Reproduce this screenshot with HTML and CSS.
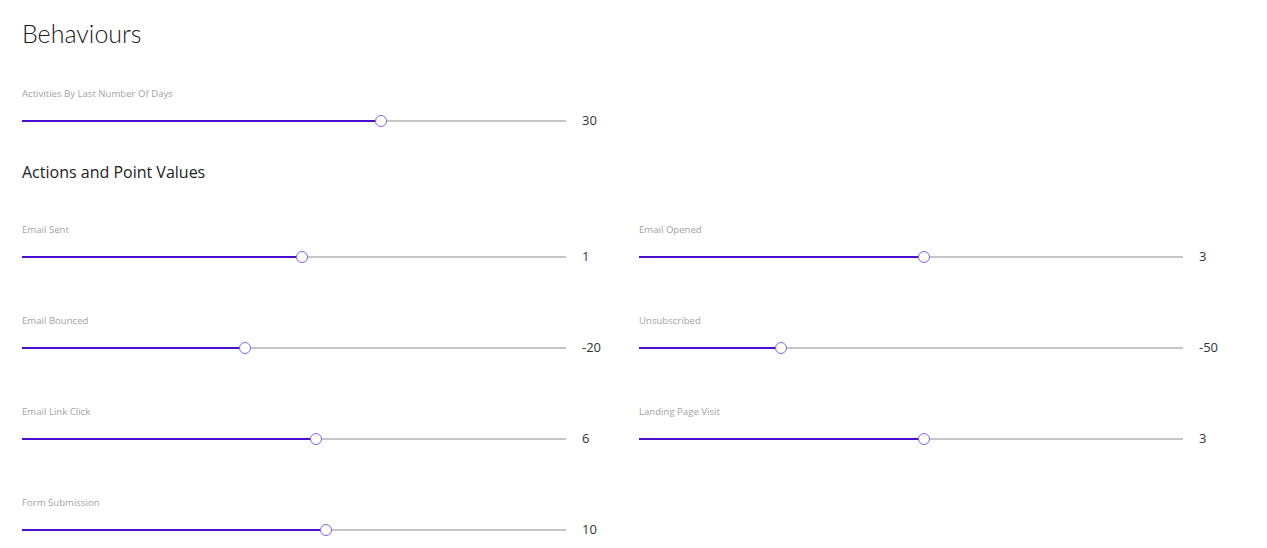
FILE: index.html
```html
<!DOCTYPE html>
<html>
<head>
<link rel="stylesheet" href="styles.css">
</head>
<body>
<div class="page">
  <h1 class="title">Behaviours</h1>

  <div class="field field-single">
    <div class="field-label">Activities By Last Number Of Days</div>
    <div class="slider-row">
      <div class="slider">
        <div class="slider-fill" style="width: 66%"></div>
        <div class="slider-thumb" style="left: 66%"></div>
      </div>
      <div class="slider-value">30</div>
    </div>
  </div>

  <h2 class="section-title">Actions and Point Values</h2>

  <div class="fields">
    <div class="field">
      <div class="field-label">Email Sent</div>
      <div class="slider-row">
        <div class="slider">
          <div class="slider-fill" style="width: 51.5%"></div>
          <div class="slider-thumb" style="left: 51.5%"></div>
        </div>
        <div class="slider-value">1</div>
      </div>
    </div>
    <div class="field">
      <div class="field-label">Email Opened</div>
      <div class="slider-row">
        <div class="slider">
          <div class="slider-fill" style="width: 52.4%"></div>
          <div class="slider-thumb" style="left: 52.4%"></div>
        </div>
        <div class="slider-value">3</div>
      </div>
    </div>
    <div class="field">
      <div class="field-label">Email Bounced</div>
      <div class="slider-row">
        <div class="slider">
          <div class="slider-fill" style="width: 41%"></div>
          <div class="slider-thumb" style="left: 41%"></div>
        </div>
        <div class="slider-value">-20</div>
      </div>
    </div>
    <div class="field">
      <div class="field-label">Unsubscribed</div>
      <div class="slider-row">
        <div class="slider">
          <div class="slider-fill" style="width: 26.1%"></div>
          <div class="slider-thumb" style="left: 26.1%"></div>
        </div>
        <div class="slider-value">-50</div>
      </div>
    </div>
    <div class="field">
      <div class="field-label">Email Link Click</div>
      <div class="slider-row">
        <div class="slider">
          <div class="slider-fill" style="width: 54%"></div>
          <div class="slider-thumb" style="left: 54%"></div>
        </div>
        <div class="slider-value">6</div>
      </div>
    </div>
    <div class="field">
      <div class="field-label">Landing Page Visit</div>
      <div class="slider-row">
        <div class="slider">
          <div class="slider-fill" style="width: 52.4%"></div>
          <div class="slider-thumb" style="left: 52.4%"></div>
        </div>
        <div class="slider-value">3</div>
      </div>
    </div>
    <div class="field">
      <div class="field-label">Form Submission</div>
      <div class="slider-row">
        <div class="slider">
          <div class="slider-fill" style="width: 55.9%"></div>
          <div class="slider-thumb" style="left: 55.9%"></div>
        </div>
        <div class="slider-value">10</div>
      </div>
    </div>
  </div>
</div>
</body>
</html>
```

FILE: styles.css
```css
*, *:before, *:after {
  box-sizing: border-box;
}

body {
  margin: 0;
  background: #fff;
  color: #222;
  font: 13px/1 'Open Sans', helvetica, sans-serif;
  -webkit-font-smoothing: antialiased;
}

.page {
  padding: 18px 22px 0;
}

.title {
  margin: 0;
  font: 300 25px/30px 'Lato', 'Open Sans', sans-serif;
  color: #1a1a1a;
}

.section-title {
  margin: 33px 0 0;
  font: 400 16px/22px 'Open Sans', sans-serif;
  color: #222;
}

.field-single {
  margin-top: 40px;
}

.fields {
  display: grid;
  grid-template-columns: 617px 617px;
  row-gap: 51px;
  margin-top: 41px;
}

.field-label {
  font-size: 9.6px;
  line-height: 12px;
  color: #a3a3a3;
}

.slider-row {
  display: flex;
  align-items: center;
  height: 14px;
  margin-top: 14px;
}

.slider {
  position: relative;
  width: 544px;
  height: 2px;
  background: #c6c6c6;
}

.slider-fill {
  height: 100%;
  background: #4a0fc9;
}

.slider-thumb {
  position: absolute;
  top: 50%;
  width: 12px;
  height: 12px;
  margin: -6px 0 0 -6px;
  border: 1.5px solid #8466dc;
  border-radius: 50%;
  background: #fff;
}

.slider-value {
  margin-left: 16px;
  margin-top: -2px;
  font-size: 13px;
  color: #333;
}
```
